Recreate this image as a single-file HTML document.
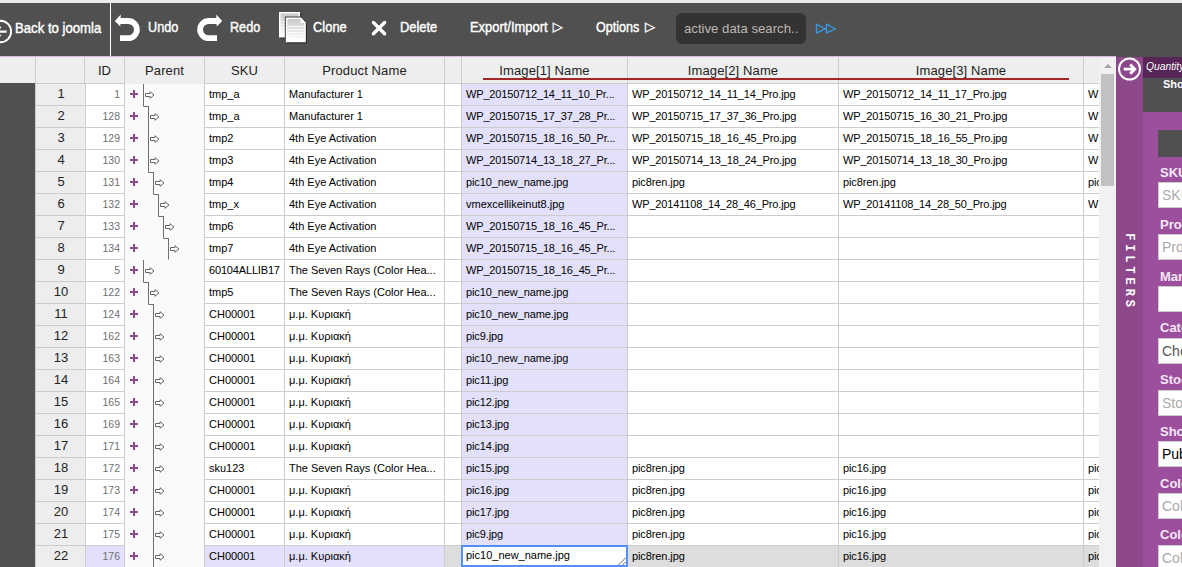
<!DOCTYPE html><html><head><meta charset="utf-8"><title>grid</title><style>
*{box-sizing:border-box;margin:0;padding:0}
html,body{width:1182px;height:567px;overflow:hidden;background:#505050;font-family:"Liberation Sans",Arial,sans-serif}
#top{position:absolute;left:0;top:0;width:1182px;height:3px;background:#ebebeb}
#tb{position:absolute;left:0;top:3px;width:1182px;height:53px;background:#505050;color:#fff}
#tb .sep{position:absolute;left:110px;top:0;width:1px;height:53px;background:#fff}
#tb .t{position:absolute;top:15px;font-weight:normal;-webkit-text-stroke:.42px #fff;font-size:14px;line-height:18px;white-space:nowrap;transform-origin:0 50%}
#tb .tri{position:absolute;top:15px;font-family:"DejaVu Sans",sans-serif;font-weight:bold;font-size:13px;line-height:18px;-webkit-text-stroke:.35px currentColor}
#ico{position:absolute;left:0;top:0;width:1182px;height:56px}
#srch{position:absolute;left:676px;top:10px;width:130px;height:31px;border-radius:6px;background:#333;color:#bdb7b0;font-size:13.2px;line-height:32px;padding-left:8px;white-space:nowrap;overflow:hidden}
#pink{position:absolute;left:0;top:56px;width:1116px;height:1px;background:#e0b6e0}
#grid{position:absolute;left:0;top:57px;width:1099px;height:510px;background:#fff;overflow:hidden}
.h{position:absolute;top:0;height:27px;letter-spacing:.12px;background:#eee;border-right:1px solid #ccc;border-bottom:1px solid #ccc;font-size:13px;line-height:27px;color:#222;text-align:center;white-space:nowrap;overflow:hidden}
.c{position:absolute;height:22px;border-right:1px solid #ccc;border-bottom:1px solid #ccc;font-size:11px;line-height:21px;color:#000;padding-left:4px;white-space:nowrap;overflow:hidden;background:#fff}
.rn{background:#ededed;line-height:20px;font-size:13px;text-align:center;padding:0 0 0 1px;color:#222;border-left:1px solid #ccc}
.id{font-size:10.5px;color:#707070;text-align:right;padding:0 4px 0 0}
.par{background:#fafafa;border-bottom:none}
.hl{background:#e2e0fa}
.gr{background:#ddd}
.w{letter-spacing:-.165px}
.p{letter-spacing:-.1px}
.plus{position:absolute;left:5px;top:6px;width:9px;height:9px}
.plus:before{content:"";position:absolute;left:0;top:3px;width:8px;height:2px;background:#8d4a8d}
.plus:after{content:"";position:absolute;left:3px;top:0;width:2px;height:8px;background:#8d4a8d}
#left{position:absolute;left:0;top:83px;width:35px;height:484px;background:#505050}
#tree{position:absolute;left:0;top:0;width:1100px;height:567px}
#ed{position:absolute;left:461px;top:545px;width:167px;height:22px;border:2px solid #5292f7;background:#fff;font-size:11px;line-height:17px;padding-left:3px;color:#000;white-space:nowrap}
#ed svg{position:absolute;right:0;bottom:0}
#sb{position:absolute;left:1099px;top:57px;width:17px;height:510px;background:#f1f1f1}
#sb .th{position:absolute;left:2px;top:17px;width:13px;height:112px;background:#c1c1c1}
#sb .up{position:absolute;left:5px;top:7px;width:0;height:0;border-left:4px solid transparent;border-right:4px solid transparent;border-bottom:4px solid #a3a3a3}
#bar{position:absolute;left:1116px;top:57px;width:27px;height:510px;background:#8c488a}
#flt{position:absolute;left:1129px;top:271.5px;width:0;height:0}
#flt span{position:absolute;left:-50px;top:-8px;width:100px;height:16px;text-align:center;transform:rotate(90deg);color:#fff;font:bold 12px/16px "Liberation Mono",monospace;letter-spacing:3.9px;white-space:nowrap}
#rp{position:absolute;left:1143px;top:57px;width:39px;height:510px;background:#9c4f9c;overflow:hidden}
#rp .q{position:absolute;left:0;top:0;width:39px;height:21px;background:#572556;color:#fff;font:italic 10.3px/20px "Liberation Sans",sans-serif;padding-left:3px;white-space:nowrap}
#rp .s{position:absolute;left:0;top:21px;width:39px;height:34px;background:#505050;color:#fff;font:bold 11px/12.5px "Liberation Sans",sans-serif;padding:0 0 0 20px;white-space:nowrap}
#rp .d{position:absolute;left:15px;top:73px;width:24px;height:27px;background:#505050}
#rp .l{position:absolute;left:17px;color:#f6e8f8;font:bold 13px/16px "Liberation Sans",sans-serif;white-space:nowrap}
#rp .i{position:absolute;left:15px;width:30px;height:26px;background:#fff;border:1px solid #ccc;color:#aaa;font:14px/25px "Liberation Sans",sans-serif;padding-left:3px;white-space:nowrap;overflow:hidden}
</style></head><body>
<div id="top"></div>
<div id="tb"><div class="sep"></div>
<span class="t" style="left:15.3px;top:16px;transform:scaleX(.9400)">Back to joomla</span>
<span class="t" style="left:147.7px;transform:scaleX(0.9053)">Undo</span>
<span class="t" style="left:230.3px;transform:scaleX(0.9023)">Redo</span>
<span class="t" style="left:313.1px;transform:scaleX(0.9237)">Clone</span>
<span class="t" style="left:399.5px;transform:scaleX(0.9217)">Delete</span>
<span class="t" style="left:469.7px;transform:scaleX(0.9235)">Export/Import</span>
<span class="t" style="left:595.5px;transform:scaleX(0.8974)">Options</span>
<span class="tri" style="left:552.8px">▷</span>
<span class="tri" style="left:645px">▷</span>
<div id="srch">active data search..</div>
<span class="tri" style="left:816.3px;top:16px;color:#33a3ee">▷▷</span>
</div>
<svg id="ico" viewBox="0 0 1182 56">
<g fill="none" stroke="#fff">
<circle cx="0.4" cy="31.5" r="10.7" stroke-width="1.9"/>
<path d="M-2 31.6H6.7M-4 31.6l4.5-4.8M-4 31.6l4.5 4.8" stroke-width="2.3"/>
<path d="M120 38.2H128.3A8.6 8.6 0 0 0 128.3 21H120" stroke-width="5.8"/>
<path d="M234.5 38.2H226.2A8.6 8.6 0 0 1 226.2 21H234.5" stroke-width="5.8" transform="translate(-17.5 0)"/>
<path d="M373.4 22.5L384.6 33.7M384.6 22.5L373.4 33.7" stroke-width="3.4" stroke-linecap="round"/>
</g>
<path d="M114.8 21L120.8 14.6L120.3 26.6Z" fill="#fff"/>
<path d="M222.2 21L216.2 14.6L216.7 26.6Z" fill="#fff"/>
<defs><linearGradient id="pg" x1="0" y1="0" x2="0" y2="1"><stop offset="0" stop-color="#c9c9c9"/><stop offset="1" stop-color="#fff"/></linearGradient></defs>
<g>
<rect x="280.2" y="13.2" width="21" height="25.5" fill="#2b2b2b"/>
<rect x="279" y="12" width="21" height="25.5" fill="#fff"/>
<rect x="280.5" y="13.5" width="18" height="22.5" fill="url(#pg)"/>
<path d="M281 21.5H298M281 24.5H298M281 27.5H298M281 30.5H298M281 33.5H298" stroke="#fff" stroke-width="1" opacity=".7"/>
<path d="M287 18.8L302 18.8L307 23.6L307 43.5L287 43.5Z" fill="#2b2b2b"/>
<path d="M284.8 16.6L301.5 16.6L306.3 21.9L305.8 42.3L284.8 42.3Z" fill="#3a3a3a"/>
<path d="M285.8 17.6L301 17.6L305.8 22.4L305.8 42.3L285.8 42.3Z" fill="#fff"/>
<path d="M287.3 19.1L300.5 19.1L300.5 23L304.3 23L304.3 40.8L287.3 40.8Z" fill="url(#pg)"/>
<path d="M288 26.5H303.5M288 29.5H303.5M288 32.5H303.5M288 35.5H303.5M288 38.5H303.5" stroke="#fff" stroke-width="1" opacity=".8"/>
</g>
</svg>
<div id="pink"></div>
<div id="grid">
<div class="h" style="left:0px;width:36px"></div>
<div class="h" style="left:36px;width:49px"></div>
<div class="h" style="left:85px;width:40px">ID</div>
<div class="h" style="left:125px;width:80px;border-bottom-color:#eee">Parent</div>
<div class="h" style="left:205px;width:80px">SKU</div>
<div class="h" style="left:285px;width:160px">Product Name</div>
<div class="h" style="left:445px;width:17px"></div>
<div class="h" style="left:462px;width:166px">Image[1] Name</div>
<div class="h" style="left:628px;width:211px">Image[2] Name</div>
<div class="h" style="left:839px;width:245px">Image[3] Name</div>
<div class="h" style="left:1084px;width:17px"></div>
<div style="position:absolute;left:483px;top:21px;width:586px;height:2px;background:#a02828"></div>
<div class="c rn" style="left:35px;top:27px;width:51px">1</div>
<div class="c id" style="left:86px;top:27px;width:39px">1</div>
<div class="c par" style="left:125px;top:27px;width:80px"><i class="plus"></i></div>
<div class="c " style="left:205px;top:27px;width:80px">tmp_a</div>
<div class="c " style="left:285px;top:27px;width:160px">Manufacturer 1</div>
<div class="c " style="left:445px;top:27px;width:17px"></div>
<div class="c hl w" style="left:462px;top:27px;width:166px">WP_20150712_14_11_10_Pr...</div>
<div class="c  w" style="left:628px;top:27px;width:211px">WP_20150712_14_11_14_Pro.jpg</div>
<div class="c  w" style="left:839px;top:27px;width:245px">WP_20150712_14_11_17_Pro.jpg</div>
<div class="c " style="left:1084px;top:27px;width:17px">W</div>
<div class="c rn" style="left:35px;top:49px;width:51px">2</div>
<div class="c id" style="left:86px;top:49px;width:39px">128</div>
<div class="c par" style="left:125px;top:49px;width:80px"><i class="plus"></i></div>
<div class="c " style="left:205px;top:49px;width:80px">tmp_a</div>
<div class="c " style="left:285px;top:49px;width:160px">Manufacturer 1</div>
<div class="c " style="left:445px;top:49px;width:17px"></div>
<div class="c hl w" style="left:462px;top:49px;width:166px">WP_20150715_17_37_28_Pr...</div>
<div class="c  w" style="left:628px;top:49px;width:211px">WP_20150715_17_37_36_Pro.jpg</div>
<div class="c  w" style="left:839px;top:49px;width:245px">WP_20150715_16_30_21_Pro.jpg</div>
<div class="c " style="left:1084px;top:49px;width:17px">W</div>
<div class="c rn" style="left:35px;top:71px;width:51px">3</div>
<div class="c id" style="left:86px;top:71px;width:39px">129</div>
<div class="c par" style="left:125px;top:71px;width:80px"><i class="plus"></i></div>
<div class="c " style="left:205px;top:71px;width:80px">tmp2</div>
<div class="c " style="left:285px;top:71px;width:160px">4th Eye Activation</div>
<div class="c " style="left:445px;top:71px;width:17px"></div>
<div class="c hl w" style="left:462px;top:71px;width:166px">WP_20150715_18_16_50_Pr...</div>
<div class="c  w" style="left:628px;top:71px;width:211px">WP_20150715_18_16_45_Pro.jpg</div>
<div class="c  w" style="left:839px;top:71px;width:245px">WP_20150715_18_16_55_Pro.jpg</div>
<div class="c " style="left:1084px;top:71px;width:17px">W</div>
<div class="c rn" style="left:35px;top:93px;width:51px">4</div>
<div class="c id" style="left:86px;top:93px;width:39px">130</div>
<div class="c par" style="left:125px;top:93px;width:80px"><i class="plus"></i></div>
<div class="c " style="left:205px;top:93px;width:80px">tmp3</div>
<div class="c " style="left:285px;top:93px;width:160px">4th Eye Activation</div>
<div class="c " style="left:445px;top:93px;width:17px"></div>
<div class="c hl w" style="left:462px;top:93px;width:166px">WP_20150714_13_18_27_Pr...</div>
<div class="c  w" style="left:628px;top:93px;width:211px">WP_20150714_13_18_24_Pro.jpg</div>
<div class="c  w" style="left:839px;top:93px;width:245px">WP_20150714_13_18_30_Pro.jpg</div>
<div class="c " style="left:1084px;top:93px;width:17px">W</div>
<div class="c rn" style="left:35px;top:115px;width:51px">5</div>
<div class="c id" style="left:86px;top:115px;width:39px">131</div>
<div class="c par" style="left:125px;top:115px;width:80px"><i class="plus"></i></div>
<div class="c " style="left:205px;top:115px;width:80px">tmp4</div>
<div class="c " style="left:285px;top:115px;width:160px">4th Eye Activation</div>
<div class="c " style="left:445px;top:115px;width:17px"></div>
<div class="c hl p" style="left:462px;top:115px;width:166px">pic10_new_name.jpg</div>
<div class="c  p" style="left:628px;top:115px;width:211px">pic8ren.jpg</div>
<div class="c  p" style="left:839px;top:115px;width:245px">pic8ren.jpg</div>
<div class="c  p" style="left:1084px;top:115px;width:17px">pic</div>
<div class="c rn" style="left:35px;top:137px;width:51px">6</div>
<div class="c id" style="left:86px;top:137px;width:39px">132</div>
<div class="c par" style="left:125px;top:137px;width:80px"><i class="plus"></i></div>
<div class="c " style="left:205px;top:137px;width:80px">tmp_x</div>
<div class="c " style="left:285px;top:137px;width:160px">4th Eye Activation</div>
<div class="c " style="left:445px;top:137px;width:17px"></div>
<div class="c hl" style="left:462px;top:137px;width:166px">vmexcellikeinut8.jpg</div>
<div class="c  w" style="left:628px;top:137px;width:211px">WP_20141108_14_28_46_Pro.jpg</div>
<div class="c  w" style="left:839px;top:137px;width:245px">WP_20141108_14_28_50_Pro.jpg</div>
<div class="c " style="left:1084px;top:137px;width:17px">W</div>
<div class="c rn" style="left:35px;top:159px;width:51px">7</div>
<div class="c id" style="left:86px;top:159px;width:39px">133</div>
<div class="c par" style="left:125px;top:159px;width:80px"><i class="plus"></i></div>
<div class="c " style="left:205px;top:159px;width:80px">tmp6</div>
<div class="c " style="left:285px;top:159px;width:160px">4th Eye Activation</div>
<div class="c " style="left:445px;top:159px;width:17px"></div>
<div class="c hl w" style="left:462px;top:159px;width:166px">WP_20150715_18_16_45_Pr...</div>
<div class="c " style="left:628px;top:159px;width:211px"></div>
<div class="c " style="left:839px;top:159px;width:245px"></div>
<div class="c " style="left:1084px;top:159px;width:17px"></div>
<div class="c rn" style="left:35px;top:181px;width:51px">8</div>
<div class="c id" style="left:86px;top:181px;width:39px">134</div>
<div class="c par" style="left:125px;top:181px;width:80px"><i class="plus"></i></div>
<div class="c " style="left:205px;top:181px;width:80px">tmp7</div>
<div class="c " style="left:285px;top:181px;width:160px">4th Eye Activation</div>
<div class="c " style="left:445px;top:181px;width:17px"></div>
<div class="c hl w" style="left:462px;top:181px;width:166px">WP_20150715_18_16_45_Pr...</div>
<div class="c " style="left:628px;top:181px;width:211px"></div>
<div class="c " style="left:839px;top:181px;width:245px"></div>
<div class="c " style="left:1084px;top:181px;width:17px"></div>
<div class="c rn" style="left:35px;top:203px;width:51px">9</div>
<div class="c id" style="left:86px;top:203px;width:39px">5</div>
<div class="c par" style="left:125px;top:203px;width:80px"><i class="plus"></i></div>
<div class="c  w" style="left:205px;top:203px;width:80px">60104ALLIB17</div>
<div class="c " style="left:285px;top:203px;width:160px">The Seven Rays (Color Hea...</div>
<div class="c " style="left:445px;top:203px;width:17px"></div>
<div class="c hl w" style="left:462px;top:203px;width:166px">WP_20150715_18_16_45_Pr...</div>
<div class="c " style="left:628px;top:203px;width:211px"></div>
<div class="c " style="left:839px;top:203px;width:245px"></div>
<div class="c " style="left:1084px;top:203px;width:17px"></div>
<div class="c rn" style="left:35px;top:225px;width:51px">10</div>
<div class="c id" style="left:86px;top:225px;width:39px">122</div>
<div class="c par" style="left:125px;top:225px;width:80px"><i class="plus"></i></div>
<div class="c " style="left:205px;top:225px;width:80px">tmp5</div>
<div class="c " style="left:285px;top:225px;width:160px">The Seven Rays (Color Hea...</div>
<div class="c " style="left:445px;top:225px;width:17px"></div>
<div class="c hl p" style="left:462px;top:225px;width:166px">pic10_new_name.jpg</div>
<div class="c " style="left:628px;top:225px;width:211px"></div>
<div class="c " style="left:839px;top:225px;width:245px"></div>
<div class="c " style="left:1084px;top:225px;width:17px"></div>
<div class="c rn" style="left:35px;top:247px;width:51px">11</div>
<div class="c id" style="left:86px;top:247px;width:39px">124</div>
<div class="c par" style="left:125px;top:247px;width:80px"><i class="plus"></i></div>
<div class="c " style="left:205px;top:247px;width:80px">CH00001</div>
<div class="c " style="left:285px;top:247px;width:160px">μ.μ. Κυριακή</div>
<div class="c " style="left:445px;top:247px;width:17px"></div>
<div class="c hl p" style="left:462px;top:247px;width:166px">pic10_new_name.jpg</div>
<div class="c " style="left:628px;top:247px;width:211px"></div>
<div class="c " style="left:839px;top:247px;width:245px"></div>
<div class="c " style="left:1084px;top:247px;width:17px"></div>
<div class="c rn" style="left:35px;top:269px;width:51px">12</div>
<div class="c id" style="left:86px;top:269px;width:39px">162</div>
<div class="c par" style="left:125px;top:269px;width:80px"><i class="plus"></i></div>
<div class="c " style="left:205px;top:269px;width:80px">CH00001</div>
<div class="c " style="left:285px;top:269px;width:160px">μ.μ. Κυριακή</div>
<div class="c " style="left:445px;top:269px;width:17px"></div>
<div class="c hl p" style="left:462px;top:269px;width:166px">pic9.jpg</div>
<div class="c " style="left:628px;top:269px;width:211px"></div>
<div class="c " style="left:839px;top:269px;width:245px"></div>
<div class="c " style="left:1084px;top:269px;width:17px"></div>
<div class="c rn" style="left:35px;top:291px;width:51px">13</div>
<div class="c id" style="left:86px;top:291px;width:39px">163</div>
<div class="c par" style="left:125px;top:291px;width:80px"><i class="plus"></i></div>
<div class="c " style="left:205px;top:291px;width:80px">CH00001</div>
<div class="c " style="left:285px;top:291px;width:160px">μ.μ. Κυριακή</div>
<div class="c " style="left:445px;top:291px;width:17px"></div>
<div class="c hl p" style="left:462px;top:291px;width:166px">pic10_new_name.jpg</div>
<div class="c " style="left:628px;top:291px;width:211px"></div>
<div class="c " style="left:839px;top:291px;width:245px"></div>
<div class="c " style="left:1084px;top:291px;width:17px"></div>
<div class="c rn" style="left:35px;top:313px;width:51px">14</div>
<div class="c id" style="left:86px;top:313px;width:39px">164</div>
<div class="c par" style="left:125px;top:313px;width:80px"><i class="plus"></i></div>
<div class="c " style="left:205px;top:313px;width:80px">CH00001</div>
<div class="c " style="left:285px;top:313px;width:160px">μ.μ. Κυριακή</div>
<div class="c " style="left:445px;top:313px;width:17px"></div>
<div class="c hl p" style="left:462px;top:313px;width:166px">pic11.jpg</div>
<div class="c " style="left:628px;top:313px;width:211px"></div>
<div class="c " style="left:839px;top:313px;width:245px"></div>
<div class="c " style="left:1084px;top:313px;width:17px"></div>
<div class="c rn" style="left:35px;top:335px;width:51px">15</div>
<div class="c id" style="left:86px;top:335px;width:39px">165</div>
<div class="c par" style="left:125px;top:335px;width:80px"><i class="plus"></i></div>
<div class="c " style="left:205px;top:335px;width:80px">CH00001</div>
<div class="c " style="left:285px;top:335px;width:160px">μ.μ. Κυριακή</div>
<div class="c " style="left:445px;top:335px;width:17px"></div>
<div class="c hl p" style="left:462px;top:335px;width:166px">pic12.jpg</div>
<div class="c " style="left:628px;top:335px;width:211px"></div>
<div class="c " style="left:839px;top:335px;width:245px"></div>
<div class="c " style="left:1084px;top:335px;width:17px"></div>
<div class="c rn" style="left:35px;top:357px;width:51px">16</div>
<div class="c id" style="left:86px;top:357px;width:39px">169</div>
<div class="c par" style="left:125px;top:357px;width:80px"><i class="plus"></i></div>
<div class="c " style="left:205px;top:357px;width:80px">CH00001</div>
<div class="c " style="left:285px;top:357px;width:160px">μ.μ. Κυριακή</div>
<div class="c " style="left:445px;top:357px;width:17px"></div>
<div class="c hl p" style="left:462px;top:357px;width:166px">pic13.jpg</div>
<div class="c " style="left:628px;top:357px;width:211px"></div>
<div class="c " style="left:839px;top:357px;width:245px"></div>
<div class="c " style="left:1084px;top:357px;width:17px"></div>
<div class="c rn" style="left:35px;top:379px;width:51px">17</div>
<div class="c id" style="left:86px;top:379px;width:39px">171</div>
<div class="c par" style="left:125px;top:379px;width:80px"><i class="plus"></i></div>
<div class="c " style="left:205px;top:379px;width:80px">CH00001</div>
<div class="c " style="left:285px;top:379px;width:160px">μ.μ. Κυριακή</div>
<div class="c " style="left:445px;top:379px;width:17px"></div>
<div class="c hl p" style="left:462px;top:379px;width:166px">pic14.jpg</div>
<div class="c " style="left:628px;top:379px;width:211px"></div>
<div class="c " style="left:839px;top:379px;width:245px"></div>
<div class="c " style="left:1084px;top:379px;width:17px"></div>
<div class="c rn" style="left:35px;top:401px;width:51px">18</div>
<div class="c id" style="left:86px;top:401px;width:39px">172</div>
<div class="c par" style="left:125px;top:401px;width:80px"><i class="plus"></i></div>
<div class="c " style="left:205px;top:401px;width:80px">sku123</div>
<div class="c " style="left:285px;top:401px;width:160px">The Seven Rays (Color Hea...</div>
<div class="c " style="left:445px;top:401px;width:17px"></div>
<div class="c hl p" style="left:462px;top:401px;width:166px">pic15.jpg</div>
<div class="c  p" style="left:628px;top:401px;width:211px">pic8ren.jpg</div>
<div class="c  p" style="left:839px;top:401px;width:245px">pic16.jpg</div>
<div class="c  p" style="left:1084px;top:401px;width:17px">pic</div>
<div class="c rn" style="left:35px;top:423px;width:51px">19</div>
<div class="c id" style="left:86px;top:423px;width:39px">173</div>
<div class="c par" style="left:125px;top:423px;width:80px"><i class="plus"></i></div>
<div class="c " style="left:205px;top:423px;width:80px">CH00001</div>
<div class="c " style="left:285px;top:423px;width:160px">μ.μ. Κυριακή</div>
<div class="c " style="left:445px;top:423px;width:17px"></div>
<div class="c hl p" style="left:462px;top:423px;width:166px">pic16.jpg</div>
<div class="c  p" style="left:628px;top:423px;width:211px">pic8ren.jpg</div>
<div class="c  p" style="left:839px;top:423px;width:245px">pic16.jpg</div>
<div class="c  p" style="left:1084px;top:423px;width:17px">pic</div>
<div class="c rn" style="left:35px;top:445px;width:51px">20</div>
<div class="c id" style="left:86px;top:445px;width:39px">174</div>
<div class="c par" style="left:125px;top:445px;width:80px"><i class="plus"></i></div>
<div class="c " style="left:205px;top:445px;width:80px">CH00001</div>
<div class="c " style="left:285px;top:445px;width:160px">μ.μ. Κυριακή</div>
<div class="c " style="left:445px;top:445px;width:17px"></div>
<div class="c hl p" style="left:462px;top:445px;width:166px">pic17.jpg</div>
<div class="c  p" style="left:628px;top:445px;width:211px">pic8ren.jpg</div>
<div class="c  p" style="left:839px;top:445px;width:245px">pic16.jpg</div>
<div class="c  p" style="left:1084px;top:445px;width:17px">pic</div>
<div class="c rn" style="left:35px;top:467px;width:51px">21</div>
<div class="c id" style="left:86px;top:467px;width:39px">175</div>
<div class="c par" style="left:125px;top:467px;width:80px"><i class="plus"></i></div>
<div class="c " style="left:205px;top:467px;width:80px">CH00001</div>
<div class="c " style="left:285px;top:467px;width:160px">μ.μ. Κυριακή</div>
<div class="c " style="left:445px;top:467px;width:17px"></div>
<div class="c hl p" style="left:462px;top:467px;width:166px">pic9.jpg</div>
<div class="c  p" style="left:628px;top:467px;width:211px">pic8ren.jpg</div>
<div class="c  p" style="left:839px;top:467px;width:245px">pic16.jpg</div>
<div class="c  p" style="left:1084px;top:467px;width:17px">pic</div>
<div class="c rn" style="left:35px;top:489px;width:51px">22</div>
<div class="c id hl" style="left:86px;top:489px;width:39px">176</div>
<div class="c par" style="left:125px;top:489px;width:80px"><i class="plus"></i></div>
<div class="c hl" style="left:205px;top:489px;width:80px">CH00001</div>
<div class="c hl" style="left:285px;top:489px;width:160px">μ.μ. Κυριακή</div>
<div class="c gr" style="left:445px;top:489px;width:17px"></div>
<div class="c hl" style="left:462px;top:489px;width:166px"></div>
<div class="c gr p" style="left:628px;top:489px;width:211px">pic8ren.jpg</div>
<div class="c gr p" style="left:839px;top:489px;width:245px">pic16.jpg</div>
<div class="c gr p" style="left:1084px;top:489px;width:17px">pic</div>
</div>
<svg id="tree" viewBox="0 0 1100 567"><path d="M143.5 84V106.5H148.5M148.5 106V128M148.5 128V150M148.5 150V172.5H153.5M153.5 172V194.5H158.5M158.5 194V216.5H163.5M163.5 216V238.5H168.5M168.5 238V259.5M143.5 260V282.5H148.5M148.5 282V304.5H153.5M153.5 304V326M153.5 326V348M153.5 348V370M153.5 370V392M153.5 392V414M153.5 414V436M153.5 436V458M153.5 458V480M153.5 480V502M153.5 502V524M153.5 524V546M153.5 546V568" fill="none" stroke="#707070" stroke-width="1"/><path d="M145.5 93.5h4.5v-1.8l4 3.3l-4 3.3v-1.8h-4.5zM150.5 115.5h4.5v-1.8l4 3.3l-4 3.3v-1.8h-4.5zM150.5 137.5h4.5v-1.8l4 3.3l-4 3.3v-1.8h-4.5zM150.5 159.5h4.5v-1.8l4 3.3l-4 3.3v-1.8h-4.5zM155.5 181.5h4.5v-1.8l4 3.3l-4 3.3v-1.8h-4.5zM160.5 203.5h4.5v-1.8l4 3.3l-4 3.3v-1.8h-4.5zM165.5 225.5h4.5v-1.8l4 3.3l-4 3.3v-1.8h-4.5zM170.5 247.5h4.5v-1.8l4 3.3l-4 3.3v-1.8h-4.5zM145.5 269.5h4.5v-1.8l4 3.3l-4 3.3v-1.8h-4.5zM150.5 291.5h4.5v-1.8l4 3.3l-4 3.3v-1.8h-4.5zM155.5 313.5h4.5v-1.8l4 3.3l-4 3.3v-1.8h-4.5zM155.5 335.5h4.5v-1.8l4 3.3l-4 3.3v-1.8h-4.5zM155.5 357.5h4.5v-1.8l4 3.3l-4 3.3v-1.8h-4.5zM155.5 379.5h4.5v-1.8l4 3.3l-4 3.3v-1.8h-4.5zM155.5 401.5h4.5v-1.8l4 3.3l-4 3.3v-1.8h-4.5zM155.5 423.5h4.5v-1.8l4 3.3l-4 3.3v-1.8h-4.5zM155.5 445.5h4.5v-1.8l4 3.3l-4 3.3v-1.8h-4.5zM155.5 467.5h4.5v-1.8l4 3.3l-4 3.3v-1.8h-4.5zM155.5 489.5h4.5v-1.8l4 3.3l-4 3.3v-1.8h-4.5zM155.5 511.5h4.5v-1.8l4 3.3l-4 3.3v-1.8h-4.5zM155.5 533.5h4.5v-1.8l4 3.3l-4 3.3v-1.8h-4.5zM155.5 555.5h4.5v-1.8l4 3.3l-4 3.3v-1.8h-4.5z" fill="#fff" stroke="#666" stroke-width="1"/></svg>
<div id="ed">pic10_new_name.jpg<svg width="8" height="8" viewBox="0 0 8 8"><path d="M0.5 8L8 0.5M4.5 8L8 4.5" stroke="#666" stroke-width="1" fill="none"/></svg></div>
<div id="left"></div>
<div id="sb"><i class="up"></i><i class="th"></i></div>
<div id="bar"></div>
<svg style="position:absolute;left:1116px;top:57px" width="27" height="27" viewBox="1116 57 27 27"><circle cx="1129.5" cy="69" r="10.5" fill="none" stroke="#fff" stroke-width="2"/><path d="M1123.7 69.2H1133M1130.2 64.6l4.6 4.6l-4.6 4.6" fill="none" stroke="#fff" stroke-width="2.8"/></svg>
<div id="flt"><span>FILTERS</span></div>
<div id="rp"><div class="q">Quantity</div><div class="s">Sho</div><div class="d"></div>
<div class="l" style="top:108px">SKU</div>
<div class="i" style="top:125px;color:#aaa">SKU</div>
<div class="l" style="top:160px">Product</div>
<div class="i" style="top:177px;color:#aaa">Product</div>
<div class="l" style="top:212px">Manufacturer</div>
<div class="i" style="top:229px;color:#aaa"></div>
<div class="l" style="top:263px">Category</div>
<div class="i" style="top:281px;color:#555">Choose</div>
<div class="l" style="top:315px">Stock</div>
<div class="i" style="top:333px;color:#aaa">Stock</div>
<div class="l" style="top:367px">Show</div>
<div class="i" style="top:384px;color:#000">Published</div>
<div class="l" style="top:419px">Color</div>
<div class="i" style="top:436px;color:#aaa">Color</div>
<div class="l" style="top:470px">Color</div>
<div class="i" style="top:488px;color:#aaa">Color</div>
</div>
</body></html>
